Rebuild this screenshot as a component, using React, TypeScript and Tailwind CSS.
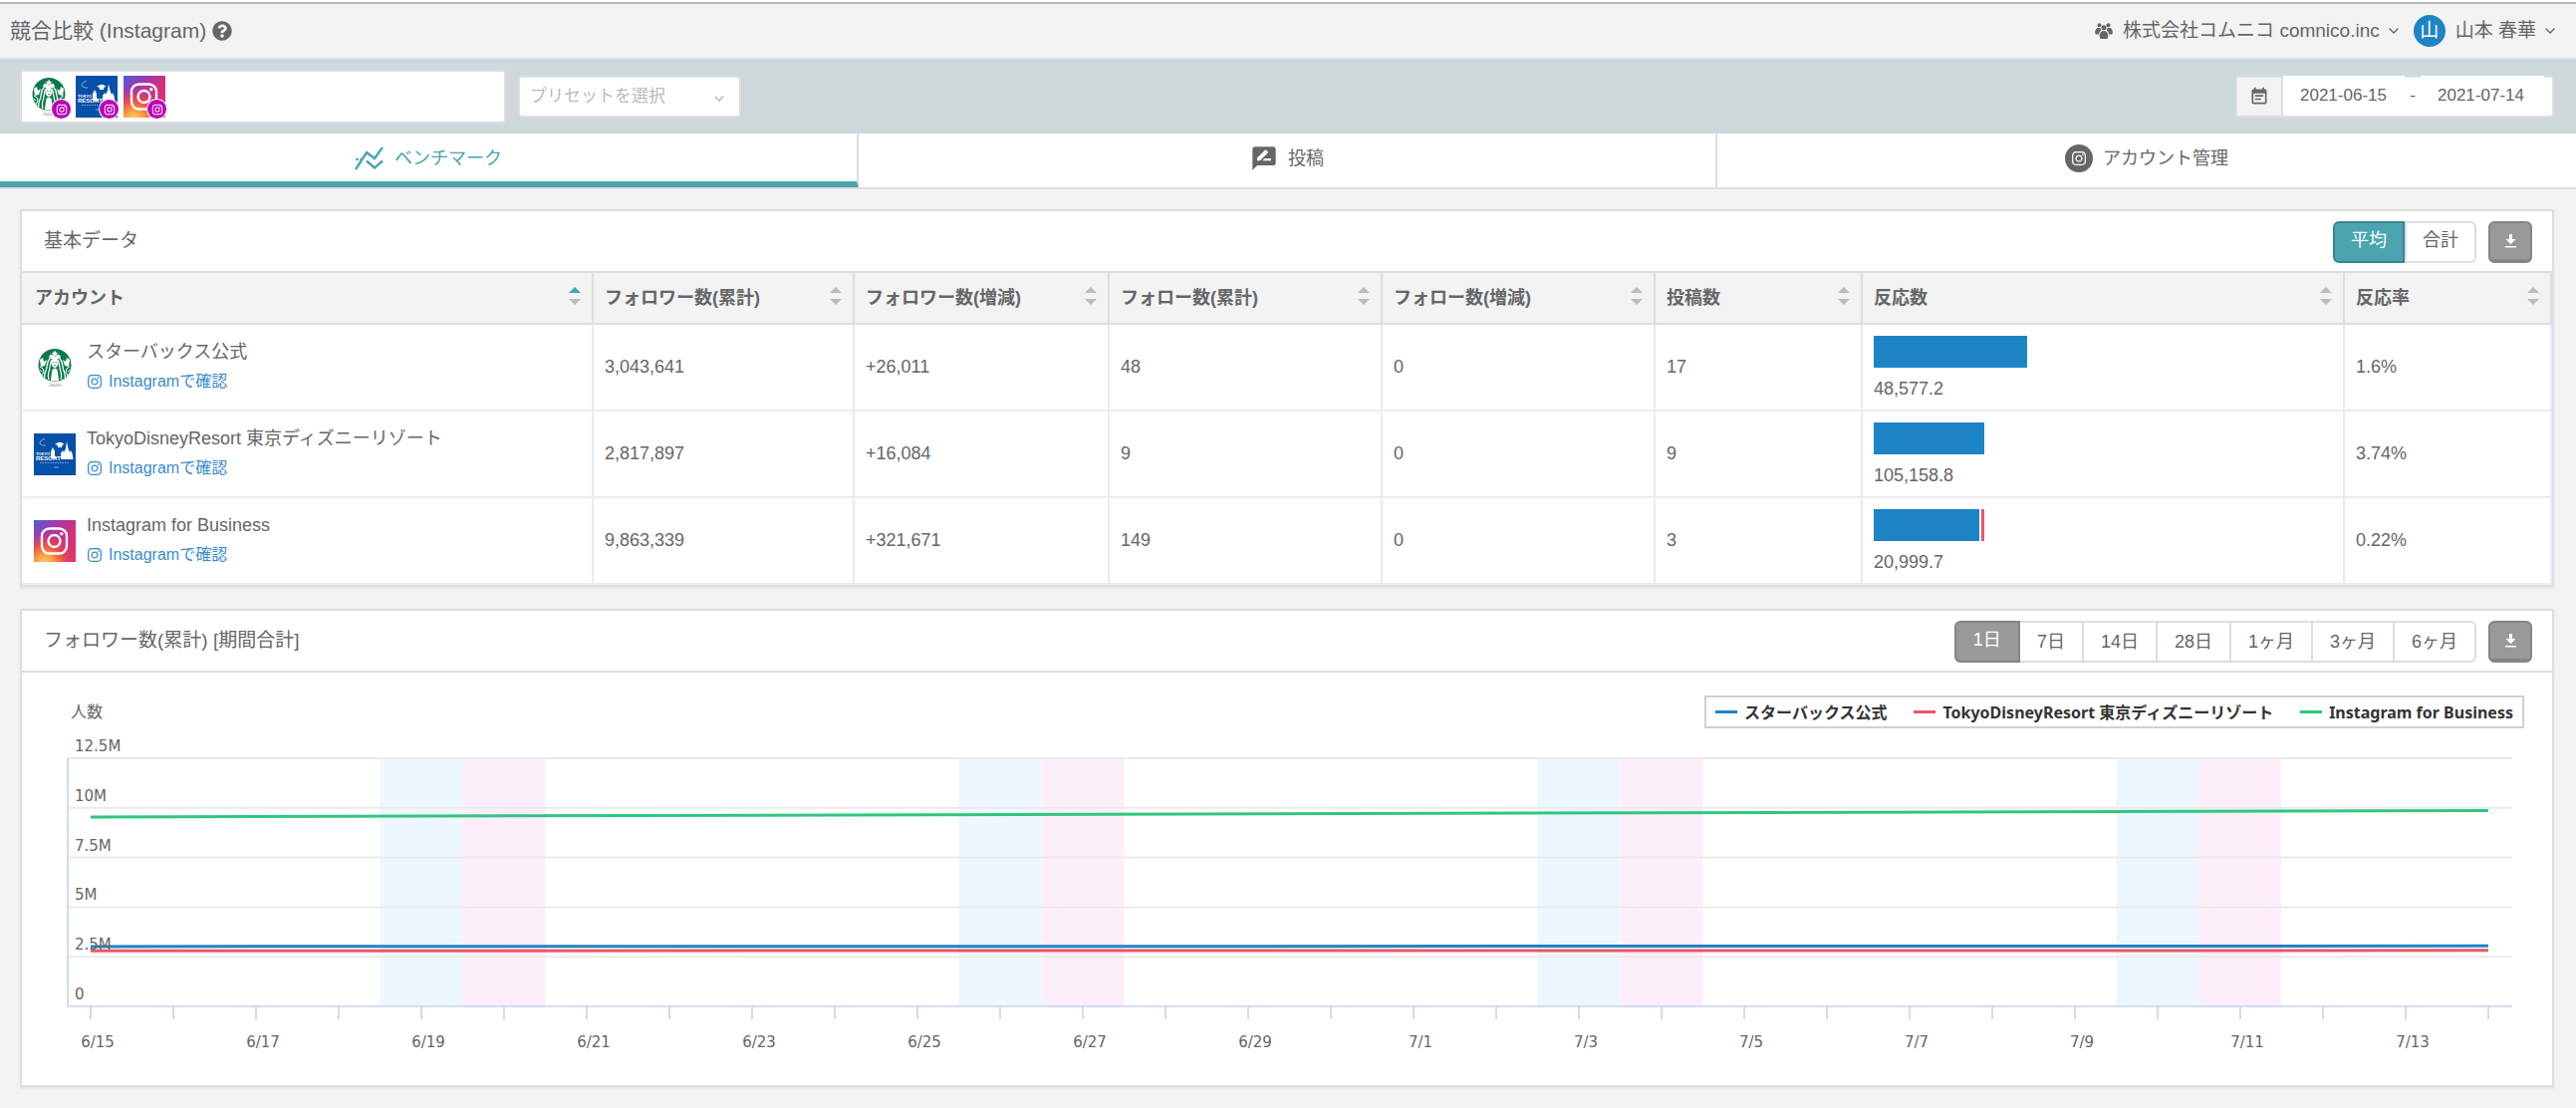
import { useId, useState } from "react";
import type { ReactNode } from "react";
import clsx from "clsx";
import { FaInstagram, FaQuestionCircle } from "react-icons/fa";
import { FiChevronDown } from "react-icons/fi";
import { MdEventNote, MdRateReview } from "react-icons/md";

type AvatarKind = "starbucks" | "disney" | "instagram";

type Account = {
  kind: AvatarKind;
  name: string;
  followers: string;
  followersDiff: string;
  follows: string;
  followsDiff: string;
  posts: string;
  reactions: string;
  rate: string;
  // share of the reaction cell, in percent
  likes: number;
  comments: number;
};

const ACCOUNTS: Account[] = [
  {
    kind: "starbucks",
    name: "スターバックス公式",
    followers: "3,043,641",
    followersDiff: "+26,011",
    follows: "48",
    followsDiff: "0",
    posts: "17",
    reactions: "48,577.2",
    rate: "1.6%",
    likes: 32.7,
    comments: 0,
  },
  {
    kind: "disney",
    name: "TokyoDisneyResort 東京ディズニーリゾート",
    followers: "2,817,897",
    followersDiff: "+16,084",
    follows: "9",
    followsDiff: "0",
    posts: "9",
    reactions: "105,158.8",
    rate: "3.74%",
    likes: 23.6,
    comments: 0,
  },
  {
    kind: "instagram",
    name: "Instagram for Business",
    followers: "9,863,339",
    followersDiff: "+321,671",
    follows: "149",
    followsDiff: "0",
    posts: "3",
    reactions: "20,999.7",
    rate: "0.22%",
    likes: 22.4,
    comments: 0.8,
  },
];

const COLUMNS = [
  { label: "アカウント", width: "w-[574px]" },
  { label: "フォロワー数(累計)", width: "w-[262px]" },
  { label: "フォロワー数(増減)", width: "w-[256px]" },
  { label: "フォロー数(累計)", width: "w-[274px]" },
  { label: "フォロー数(増減)", width: "w-[274px]" },
  { label: "投稿数", width: "w-[208px]" },
  { label: "反応数", width: "w-[484px]" },
  { label: "反応率", width: "w-[208px]" },
];

const PERIODS = ["1日", "7日", "14日", "28日", "1ヶ月", "3ヶ月", "6ヶ月"];

const SERIES = [
  { name: "スターバックス公式", color: "#1d84c6", dash: "bg-[#1d84c6]", from: 3.018, to: 3.044 },
  { name: "TokyoDisneyResort 東京ディズニーリゾート", color: "#ed5565", dash: "bg-[#ed5565]", from: 2.802, to: 2.818 },
  { name: "Instagram for Business", color: "#2ec77f", dash: "bg-[#2ec77f]", from: 9.542, to: 9.863 },
];

function AccountAvatar({ kind }: { kind: AvatarKind }) {
  const id = useId();

  if (kind === "starbucks") {
    return (
      <svg viewBox="0 0 42 42" className="block size-[42px]" aria-hidden="true">
        <rect width="42" height="42" fill="#fff" />
        <circle cx="21" cy="18.5" r="16.5" fill="#0b7a4b" />
        <path d="M21 3.5l1 2.2 2.4.2-1.8 1.6.5 2.3-2.1-1.2-2.1 1.2.5-2.3-1.8-1.6 2.4-.2z" fill="#fff" />
        <path d="M15 10l2-2.5 4 2 4-2 2 2.5-1 2H16z" fill="#fff" />
        <path d="M16 12c-4 4-2 8-4 12-1 3-2 4-1 7M26 12c4 4 2 8 4 12 1 3 2 4 1 7" stroke="#fff" strokeWidth="1.3" fill="none" />
        <path d="M18 13c-3 5-1 8-3 12-1 3-1 5 0 8M24 13c3 5 1 8 3 12 1 3 1 5 0 8" stroke="#fff" strokeWidth="1.2" fill="none" />
        <path d="M17.5 13q3.5-3 7 0v4q-1 4-3.5 4t-3.5-4z" fill="#fff" />
        <path d="M19 15.5h1.5M21.8 15.5h1.5M20 18.5h2.2" stroke="#0b7a4b" strokeWidth=".7" />
        <path d="M18.5 23q2.5-3 5 0l1 6 .5 5.5h-8l.5-5.500z" fill="#fff" />
        <path d="M6 13l3-2 1 4 3-2-2 6-4 1zM36 13l-3-2-1 4-3-2 2 6 4 1z" fill="#fff" />
        <path d="M6 20q4 1 4 5l-2 4M36 20q-4 1-4 5l2 4M5.5 23l2.5 2M36.5 23L34 25" stroke="#fff" strokeWidth="1" fill="none" />
        <text x="21" y="40" textAnchor="middle" fontSize="5" fill="#aaa">
          Japan
        </text>
      </svg>
    );
  }

  if (kind === "disney") {
    return (
      <svg viewBox="0 0 42 42" className="block size-[42px]" aria-hidden="true">
        <rect width="42" height="42" fill="#0550a8" />
        <path d="M11 5q-5 2-5 4.5t6 2.5" stroke="#8db4e0" strokeWidth="1" fill="none" />
        <path d="M21 11q2-2 5-2.2 3 .2 4.5 2.2l-2 .5-.5 2.5h-4l-.5-2.5z" fill="#fff" />
        <path d="M17 25v-7l2-4 2 4v4l2 3z" fill="#fff" />
        <path d="M27 26v-6l2-3 1 2 2-4 1-7 1.5 7 1.5 4 1-2 1.5 3 1 6z" fill="#fff" />
        <text x="2" y="22" fontSize="4" fontWeight="700" fill="#fff">
          TOKYO
        </text>
        <text x="2" y="27" fontSize="6" fontWeight="700" fill="#fff">
          RESORT
        </text>
        <path d="M6 29.5h30" stroke="#7fa9da" strokeWidth="1.2" strokeDasharray="1.5 1" />
        <path d="M20 34h5" stroke="#7fa9da" strokeWidth="1" />
      </svg>
    );
  }

  return (
    <svg viewBox="0 0 42 42" className="block size-[42px]" aria-hidden="true">
      <defs>
        <linearGradient id={`${id}a`} x1="0" y1="0" x2="1" y2="1">
          <stop offset="0" stopColor="#4a5fd8" />
          <stop offset=".3" stopColor="#a238b0" />
          <stop offset=".6" stopColor="#d62f78" />
          <stop offset="1" stopColor="#e0356a" />
        </linearGradient>
        <radialGradient id={`${id}b`} cx=".25" cy="1.05" r=".8">
          <stop offset="0" stopColor="#ffd776" />
          <stop offset=".3" stopColor="#fb9a3c" />
          <stop offset=".6" stopColor="#f0503f" stopOpacity=".8" />
          <stop offset="1" stopColor="#d62f78" stopOpacity="0" />
        </radialGradient>
      </defs>
      <rect width="42" height="42" fill={`url(#${id}a)`} />
      <rect width="42" height="42" fill={`url(#${id}b)`} />
      <rect x="8" y="8.5" width="25" height="25" rx="7.5" fill="none" stroke="#fff" strokeWidth="2.4" />
      <circle cx="20.5" cy="21" r="6" fill="none" stroke="#fff" strokeWidth="2.4" />
      <circle cx="27.8" cy="13.8" r="1.7" fill="#fff" />
    </svg>
  );
}

function TeamIcon() {
  return (
    <svg viewBox="0 0 18 16" className="h-4 w-[18px] fill-current" aria-hidden="true">
      <circle cx="4.5" cy="2.3" r="2" />
      <circle cx="13.5" cy="2.3" r="2" />
      <circle cx="9" cy="4.8" r="2.5" />
      <path d="M.2 10.5Q0 5 3.5 5h1.8l1 2.2Q4 8.5 4 11.5H1.300Q.3 11.5.2 10.5z" />
      <path d="M17.8 10.5Q18 5 14.5 5h-1.8l-1 2.2Q14 8.5 14 11.5h2.7q1 0 1.1-1z" />
      <path d="M9 8q4 0 4.3 4.5.2 3.3-1.8 3.5h-5q-2-.2-1.8-3.500Q5 8 9 8z" />
    </svg>
  );
}

function BenchmarkIcon() {
  return (
    <svg viewBox="0 0 30 24" className="h-6 w-[30px]" fill="none" stroke="currentColor" strokeWidth="2.4" aria-hidden="true">
      <path d="M1 23L12 6l8 6 8-11" />
      <path d="M12 14.5l8 7 8-7" />
      <circle cx="2.5" cy="13" r="1.4" fill="currentColor" stroke="none" />
      <circle cx="6" cy="13" r="1" fill="currentColor" stroke="none" />
    </svg>
  );
}

function DownloadButton() {
  return (
    <button
      type="button"
      aria-label="ダウンロード"
      className="flex h-[42px] w-11 items-center justify-center rounded-md border-2 border-b-4 border-[#858585] bg-[#999]"
    >
      <svg viewBox="0 0 11 14" className="h-[14px] w-[11px]" fill="#fff" aria-hidden="true">
        <path d="M4 0h3v5h3.5l-5 5.2L.5 5H4zM0 12h11v1.6H0z" />
      </svg>
    </button>
  );
}

function SortIcon({ active }: { active: boolean }) {
  return (
    <svg viewBox="0 0 12 18" className="mb-1 h-[18px] w-3 shrink-0" aria-hidden="true">
      <path d="M6 0l6 6H0z" fill={active ? "#4aa5b0" : "#b9bbbd"} />
      <path d="M6 18l6-6H0z" fill="#b9bbbd" />
    </svg>
  );
}

function Card({ title, actions, children }: { title: string; actions: ReactNode; children: ReactNode }) {
  return (
    <section className="border-2 border-[#dddde3] bg-white shadow-[0_2px_2px_rgba(0,0,0,0.06)]">
      <header className="flex h-[62px] items-center justify-between border-b-2 border-[#dddde3] pl-[22px] pr-5 pt-[2px]">
        <h2 className="pb-[2px] text-[19px]">{title}</h2>
        <div className="flex items-center gap-3">{actions}</div>
      </header>
      {children}
    </section>
  );
}

function TopBar() {
  return (
    <header className="flex h-14 items-center justify-between border-b-2 border-[#dddde3] pl-[10px] pr-[18px] text-[19px]">
      <h1 className="flex items-center gap-[6px] text-[21px]">
        競合比較 (Instagram)
        <FaQuestionCircle className="size-5" />
      </h1>
      <div className="flex items-center gap-3">
        <button type="button" className="flex items-center">
          <TeamIcon />
          <span className="ml-[10px]">株式会社コムニコ comnico.inc</span>
          <FiChevronDown className="ml-[6px] size-4" />
        </button>
        <button type="button" className="flex items-center">
          <span className="flex size-8 items-center justify-center rounded-full bg-[#1d84c6] text-white">山</span>
          <span className="ml-[10px]">山本 春華</span>
          <FiChevronDown className="ml-[6px] size-4" />
        </button>
      </div>
    </header>
  );
}

function FilterBar() {
  return (
    <div className="flex h-[74px] items-center justify-between bg-[#cfd8db] pl-5 pr-[22px] text-[17px]">
      <div className="flex items-center gap-3">
        <div className="flex h-[54px] w-[488px] items-center gap-[6px] rounded border-2 border-[#dddde3] bg-white px-[6px]">
          {ACCOUNTS.map((account) => (
            <div key={account.kind} className="relative">
              <AccountAvatar kind={account.kind} />
              <span className="absolute -bottom-px -right-px flex size-[19px] items-center justify-center rounded-full bg-[#b900b4] text-white ring-1 ring-white">
                <FaInstagram className="size-3" />
              </span>
            </div>
          ))}
        </div>
        <div className="relative">
          <select
            aria-label="プリセットを選択"
            className="h-[42px] w-[224px] appearance-none rounded border-2 border-[#dddde3] bg-white pl-[10px] text-[#b9bbbd]"
          >
            <option>プリセットを選択</option>
          </select>
          <FiChevronDown className="pointer-events-none absolute right-[14px] top-[15px] size-4 text-[#b0b3b6]" />
        </div>
      </div>
      <div className="flex h-[42px] overflow-hidden rounded border-x-2 border-b-2 border-[#dddde3] bg-white">
        <span className="flex w-[46px] items-center justify-center border-r-2 border-t-2 border-[#dddde3] bg-[#f3f3f3]">
          <MdEventNote className="size-5" />
        </span>
        <input aria-label="開始日" defaultValue="2021-06-15" className="w-[122px] pl-[17px]" />
        <span className="w-4 border-t-2 border-[#dddde3] pt-1 text-center leading-7">-</span>
        <input aria-label="終了日" defaultValue="2021-07-14" className="w-[124px] pl-[17px]" />
        <span className="w-2 border-t-2 border-[#dddde3]" />
      </div>
    </div>
  );
}

function Tabs() {
  const [active, setActive] = useState(0);
  const tabs = [
    { label: "ベンチマーク", icon: <BenchmarkIcon /> },
    { label: "投稿", icon: <MdRateReview className="size-7" /> },
    {
      label: "アカウント管理",
      icon: (
        <span className="flex size-7 items-center justify-center rounded-full bg-[#646668] text-white">
          <FaInstagram className="size-4" />
        </span>
      ),
    },
  ];

  return (
    <nav className="grid grid-cols-3 border-b-2 border-[#dddde3] bg-white">
      {tabs.map((tab, i) => (
        <button
          key={tab.label}
          type="button"
          onClick={() => setActive(i)}
          className={clsx(
            "flex h-[54px] items-center justify-center gap-[10px] pt-[2px]",
            i < tabs.length - 1 && "border-r-2 border-r-[#dddde3]",
            i === active ? "border-b-6 border-b-[#4aa5b0] text-[#4aa5b0]" : "pb-[6px]",
          )}
        >
          {tab.icon}
          {tab.label}
        </button>
      ))}
    </nav>
  );
}

function BasicData() {
  const [mode, setMode] = useState("平均");

  const actions = (
    <>
      <div className="flex h-[42px]">
        {["平均", "合計"].map((label) => (
          <button
            key={label}
            type="button"
            onClick={() => setMode(label)}
            className={clsx(
              "w-[72px] border-2 pb-1 first:rounded-l-md last:rounded-r-md",
              label === mode ? "border-[#3b8590] bg-[#4aa5b0] text-white" : "border-[#dddde3] bg-white",
            )}
          >
            {label}
          </button>
        ))}
      </div>
      <DownloadButton />
    </>
  );

  return (
    <Card title="基本データ" actions={actions}>
      <table className="w-full table-fixed border-separate border-spacing-0 text-left">
        <thead className="bg-[#f3f3f3]">
          <tr>
            {COLUMNS.map((col, i) => (
              <th
                key={col.label}
                className={clsx(
                  "h-[52px] border-b-2 border-r-2 border-[#dddde3] px-[11px] first:pl-[13px]",
                  col.width,
                )}
              >
                <div className="flex items-center justify-between">
                  {col.label}
                  <SortIcon active={i === 0} />
                </div>
              </th>
            ))}
          </tr>
        </thead>
        <tbody className="[&_td]:h-[87px] [&_td]:border-b-2 [&_td]:border-r-2 [&_td]:border-[#e9ecf5] [&_td]:pl-[11px]">
          {ACCOUNTS.map((row) => (
            <tr key={row.kind}>
              <td>
                <div className="flex items-center gap-[11px] pl-px">
                  <AccountAvatar kind={row.kind} />
                  <div className="pb-[2px]">
                    <p>{row.name}</p>
                    <a href="#" className="mt-1 flex items-center gap-[6px] text-base text-[#3a8bd0]">
                      <FaInstagram className="size-4" />
                      Instagramで確認
                    </a>
                  </div>
                </div>
              </td>
              <td>{row.followers}</td>
              <td>{row.followersDiff}</td>
              <td>{row.follows}</td>
              <td>{row.followsDiff}</td>
              <td>{row.posts}</td>
              <td>
                <div className="mb-2 mt-1 flex h-8 gap-[2px]">
                  <div className="bg-[#1d84c6]" style={{ width: `${row.likes}%` }} />
                  {row.comments > 0 ? <div className="bg-[#ed5565]" style={{ width: `${row.comments}%` }} /> : null}
                </div>
                {row.reactions}
              </td>
              <td>{row.rate}</td>
            </tr>
          ))}
        </tbody>
      </table>
    </Card>
  );
}

const DAYS = 30;
const PLOT = { left: 46, right: 2500, top: 30, bottom: 279 };

const dayX = (day: number) => 69 + day * 83;
const valueY = (millions: number) => PLOT.bottom - (millions / 12.5) * (PLOT.bottom - PLOT.top);

// the range starts on 6/15, June has 30 days
const dayLabel = (day: number) => (day < 16 ? `6/${15 + day}` : `7/${day - 15}`);

function LineChart() {
  const days = Array.from({ length: DAYS }, (_, i) => i);
  const levels = [12.5, 10, 7.5, 5, 2.5, 0];

  return (
    <svg
      viewBox="0 0 2540 358"
      className="block w-full font-['DejaVu_Sans','Noto_Sans_CJK_JP',sans-serif] text-[15px]"
      role="img"
      aria-label="フォロワー数(累計)"
    >
      {[4, 11, 18, 25].map((saturday) => (
        <g key={saturday}>
          <rect x={dayX(saturday - 0.5)} y={PLOT.top} width="83" height={PLOT.bottom - PLOT.top} fill="#eef7ff" />
          <rect x={dayX(saturday + 0.5)} y={PLOT.top} width="83" height={PLOT.bottom - PLOT.top} fill="#fdeff9" />
        </g>
      ))}
      {levels.slice(0, -1).map((level) => (
        <line key={level} x1={PLOT.left} x2={PLOT.right} y1={valueY(level)} y2={valueY(level)} stroke="#ebebeb" strokeWidth="2" />
      ))}
      <path d={`M${PLOT.left} ${PLOT.top}V${PLOT.bottom}H${PLOT.right}`} fill="none" stroke="#d3dcf0" strokeWidth="2" />
      {days.map((day) => (
        <line key={day} x1={dayX(day)} x2={dayX(day)} y1={PLOT.bottom} y2={PLOT.bottom + 13} stroke="#d3dcf0" strokeWidth="2" />
      ))}
      {SERIES.map((s) => (
        <line
          key={s.name}
          x1={dayX(0)}
          y1={valueY(s.from)}
          x2={dayX(DAYS - 1)}
          y2={valueY(s.to)}
          stroke={s.color}
          strokeWidth="3"
        />
      ))}
      {levels.map((level) => (
        <text key={level} x="53" y={valueY(level) - 7} fill="#666">
          {level === 0 ? "0" : `${level}M`}
        </text>
      ))}
      {days
        .filter((day) => day % 2 === 0)
        .map((day) => (
          <text key={day} x={dayX(day) + 7} y="320" textAnchor="middle" fill="#666">
            {dayLabel(day)}
          </text>
        ))}
    </svg>
  );
}

function FollowerChart() {
  const [period, setPeriod] = useState("1日");

  const actions = (
    <>
      <div className="flex h-[42px]">
        {PERIODS.map((label) => (
          <button
            key={label}
            type="button"
            onClick={() => setPeriod(label)}
            className={clsx(
              "border-y-2 border-r-2 px-[17px] first:rounded-l-md first:border-l-2 last:rounded-r-md",
              label === period ? "border-[#858585] bg-[#999] pb-1 text-white" : "border-[#dddde3] bg-white",
            )}
          >
            {label}
          </button>
        ))}
      </div>
      <DownloadButton />
    </>
  );

  return (
    <Card title="フォロワー数(累計) [期間合計]" actions={actions}>
      <div className="flex items-center justify-between pl-[49px] pr-7 pt-[23px]">
        <span className="text-base">人数</span>
        <ul className="flex h-[33px] items-center gap-[27px] border-2 border-[#d0d0d0] px-[9px] font-['Noto_Sans','Noto_Sans_CJK_JP',sans-serif] text-base font-bold text-[#333]">
          {SERIES.map((s) => (
            <li key={s.name} className="flex items-center gap-[7px]">
              <span className={clsx("h-[3px] w-[22px]", s.dash)} />
              {s.name}
            </li>
          ))}
        </ul>
      </div>
      <LineChart />
    </Card>
  );
}

export default function App() {
  return (
    <div
      lang="ja"
      className="min-h-screen border-t-2 border-white bg-[#f3f3f3] font-['Liberation_Sans','Noto_Sans_CJK_JP',sans-serif] text-[18px] leading-normal text-[#646668]"
    >
      <div className="border-t-2 border-[#b5b5b5]">
        <TopBar />
        <FilterBar />
        <Tabs />
        <main className="flex flex-col gap-[22px] pb-5 pl-5 pr-[22px] pt-5">
          <BasicData />
          <FollowerChart />
        </main>
      </div>
    </div>
  );
}
